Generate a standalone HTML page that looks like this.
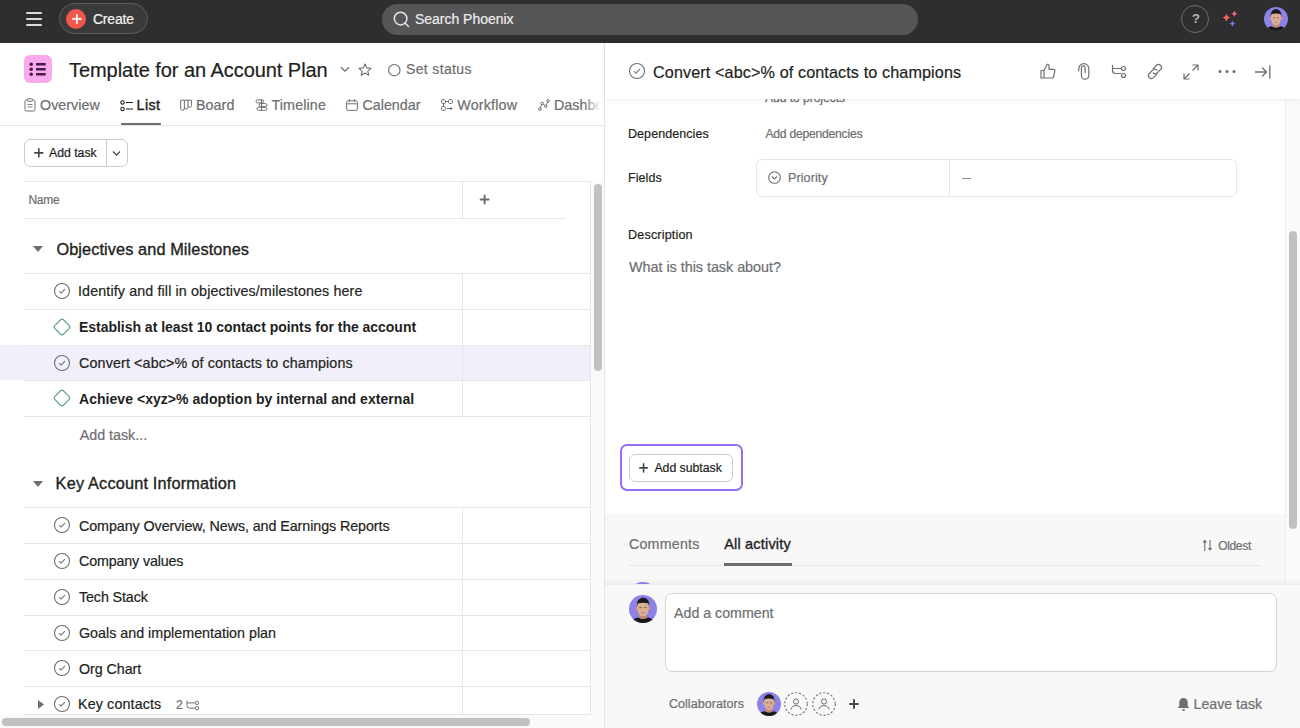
<!DOCTYPE html>
<html><head><meta charset="utf-8">
<style>
*{box-sizing:border-box;margin:0;padding:0}
html,body{width:1300px;height:728px;overflow:hidden;background:#fff;font-family:"Liberation Sans",sans-serif;color:#1e1f21}
.abs{position:absolute}
.t{position:absolute;white-space:nowrap;line-height:1;-webkit-text-stroke:0.2px currentColor}
svg{position:absolute;overflow:visible}
</style></head><body>
<div class="abs" style="left:0px;top:0px;width:1300px;height:43px;background:#2e2e30"></div>
<div class="abs" style="left:25.7px;top:12.1px;width:16.2px;height:2px;background:#dcdcdc;border-radius:1px"></div>
<div class="abs" style="left:25.7px;top:18.1px;width:16.2px;height:2px;background:#dcdcdc;border-radius:1px"></div>
<div class="abs" style="left:25.7px;top:24.0px;width:16.2px;height:2px;background:#dcdcdc;border-radius:1px"></div>
<div class="abs" style="left:59.3px;top:3.3px;width:88.5px;height:31.2px;border:1px solid #5c5c5e;border-radius:16px;background:#3a3a3c"></div>
<div class="abs" style="left:66.3px;top:8.8px;width:20.2px;height:20.2px;background:#f1574a;border-radius:50%"></div>
<svg style="left:68.5px;top:10.8px;" width="15.8" height="15.9" viewBox="0 0 15.8 15.9"><path d="M3.90 7.95H11.90M7.90 3.90V12.00" stroke="#fff" stroke-width="1.8" stroke-linecap="round"/></svg>
<div class="t" style="left:92.90px;top:12.05px;font-size:14px;color:#f5f4f3;letter-spacing:-0.187px;">Create</div>
<div class="abs" style="left:382px;top:3.5px;width:536px;height:31px;background:#565557;border-radius:16px"></div>
<svg style="left:393px;top:11px;" width="18" height="18" viewBox="0 0 18 18"><circle cx="7.6" cy="7.6" r="6.3" fill="none" stroke="#e6e6e6" stroke-width="1.5"/><line x1="12" y1="12" x2="15.5" y2="15.5" stroke="#e6e6e6" stroke-width="1.5" stroke-linecap="round"/></svg>
<div class="t" style="left:414.90px;top:11.75px;font-size:14px;color:#ededed;letter-spacing:-0.011px;">Search Phoenix</div>
<div class="abs" style="left:1181px;top:5px;width:28px;height:28px;border:1px solid #6e6e70;border-radius:50%"></div>
<div class="t" style="left:1191.70px;top:12.47px;font-size:13.5px;color:#b4b4b4;font-weight:bold;-webkit-text-stroke-width:0;">?</div>
<svg style="left:1220px;top:8px;" width="20" height="20" viewBox="0 0 20 20"><path d="M6.4 5.199999999999999 Q7.016 8.984 10.8 9.6 Q7.016 10.216 6.4 14.0 Q5.784000000000001 10.216 2.0 9.6 Q5.784000000000001 8.984 6.4 5.199999999999999Z" fill="#f4645a"/><path d="M14.4 2.5 Q14.862 5.338 17.7 5.8 Q14.862 6.262 14.4 9.1 Q13.938 6.262 11.100000000000001 5.8 Q13.938 5.338 14.4 2.5Z" fill="#ec6b7a"/><path d="M12.4 12.399999999999999 Q12.848 15.152 15.600000000000001 15.6 Q12.848 16.048 12.4 18.8 Q11.952 16.048 9.2 15.6 Q11.952 15.152 12.4 12.399999999999999Z" fill="#6d7cf0"/></svg>
<svg style="left:1264.1px;top:6.699999999999999px;" width="24" height="24" viewBox="0 0 24 24"><defs><clipPath id="c12761187"><circle cx="12" cy="12" r="12"/></clipPath></defs>
<g clip-path="url(#c12761187)"><rect width="24" height="24" fill="#8c82e8"/>
<g transform="scale(1.0)">
<path d="M0 26 Q2 20 7.8 19.2 Q12 21.6 16.2 19.2 Q22 20 24 26Z" fill="#1a1718"/>
<path d="M8.4 15.5 H15.6 V19.4 Q12 21.6 8.4 19.4Z" fill="#b98870"/>
<ellipse cx="6.6" cy="11.3" rx="1.1" ry="1.8" fill="#c8977f"/>
<ellipse cx="17.5" cy="11.3" rx="1.1" ry="1.8" fill="#c8977f"/>
<path d="M7.1 9 Q6.9 15.2 9.4 17.5 Q12 19.1 14.6 17.5 Q17.1 15.2 16.9 9 Q17 4.5 12 4.5 Q7 4.5 7.1 9Z" fill="#dcae96"/>
<path d="M6.7 10.3 Q6.1 2.8 12 2.1 Q17.9 2.5 17.4 10.3 Q17 7.5 16.2 7 Q12 6.2 7.8 7 Q7.1 7.5 6.7 10.3Z" fill="#1f1a19"/>
<path d="M8.9 10.8h2.2M12.9 10.8h2.2" stroke="#7a5a4c" stroke-width=".8"/>
<path d="M10.6 15.2 Q12 15.8 13.4 15.2" stroke="#a8705f" stroke-width=".7" fill="none"/>
</g></g></svg>
<div class="abs" style="left:24px;top:55px;width:28px;height:28px;background:#f9aaef;border-radius:6px"></div>
<svg style="left:24px;top:55px;" width="28" height="28" viewBox="0 0 28 28"><circle cx="7.2" cy="9.3" r="1.75" fill="#4a1a44"/><rect x="12" y="8.0" width="9.7" height="2.6" rx=".5" fill="#4a1a44"/><circle cx="7.2" cy="14.3" r="1.75" fill="#4a1a44"/><rect x="12" y="13.0" width="9.7" height="2.6" rx=".5" fill="#4a1a44"/><circle cx="7.2" cy="19.3" r="1.75" fill="#4a1a44"/><rect x="12" y="18.0" width="9.7" height="2.6" rx=".5" fill="#4a1a44"/></svg>
<div class="t" style="left:69.00px;top:60.47px;font-size:20px;color:#1e1f21;letter-spacing:-0.053px;">Template for an Account Plan</div>
<svg style="left:340px;top:66px;" width="10" height="7" viewBox="0 0 10 7"><path d="M1 1.2 L5 5.2 L9 1.2" fill="none" stroke="#6d6e6f" stroke-width="1.3"/></svg>
<svg style="left:358px;top:63px;" width="14" height="13" viewBox="0 0 14 13"><path d="M7 1 L8.8 4.9 L13 5.3 L9.8 8.1 L10.8 12.3 L7 10.1 L3.2 12.3 L4.2 8.1 L1 5.3 L5.2 4.9Z" fill="none" stroke="#6d6e6f" stroke-width="1.1" stroke-linejoin="round"/></svg>
<svg style="left:387.5px;top:63.5px;" width="13" height="13" viewBox="0 0 13 13"><circle cx="6.3" cy="6.2" r="5.7" fill="none" stroke="#6d6e6f" stroke-width="1.1"/></svg>
<div class="t" style="left:406.00px;top:62.45px;font-size:14px;color:#6d6e6f;letter-spacing:0.361px;-webkit-text-stroke:0.35px #6d6e6f;-webkit-text-stroke-width:0.2px;">Set status</div>
<div class="t" style="left:40.00px;top:97.90px;font-size:14.3px;color:#6d6e6f;letter-spacing:0.020px;-webkit-text-stroke:0.35px #6d6e6f;-webkit-text-stroke-width:0.2px;">Overview</div>
<div class="t" style="left:136.60px;top:97.90px;font-size:14.3px;color:#1e1f21;letter-spacing:0.375px;-webkit-text-stroke:0.35px #1e1f21;-webkit-text-stroke-width:0.4px;">List</div>
<div class="t" style="left:196.00px;top:97.90px;font-size:14.3px;color:#6d6e6f;letter-spacing:0.050px;-webkit-text-stroke:0.35px #6d6e6f;-webkit-text-stroke-width:0.2px;">Board</div>
<div class="t" style="left:271.50px;top:97.90px;font-size:14.3px;color:#6d6e6f;letter-spacing:0.122px;-webkit-text-stroke:0.35px #6d6e6f;-webkit-text-stroke-width:0.2px;">Timeline</div>
<div class="t" style="left:362.50px;top:97.90px;font-size:14.3px;color:#6d6e6f;letter-spacing:-0.008px;-webkit-text-stroke:0.35px #6d6e6f;-webkit-text-stroke-width:0.2px;">Calendar</div>
<div class="t" style="left:457.30px;top:97.90px;font-size:14.3px;color:#6d6e6f;letter-spacing:0.172px;-webkit-text-stroke:0.35px #6d6e6f;-webkit-text-stroke-width:0.2px;">Workflow</div>
<div class="t" style="left:554.00px;top:97.90px;font-size:14.3px;color:#6d6e6f;-webkit-text-stroke:0.35px #6d6e6f;-webkit-text-stroke-width:0.2px;">Dashboard</div>
<div class="abs" style="left:584px;top:95px;width:21px;height:20px;background:linear-gradient(90deg,rgba(255,255,255,0),#fff 80%)"></div>
<svg style="left:24px;top:98px;" width="12" height="14" viewBox="0 0 12 14"><rect x="1" y="2" width="10" height="11" rx="1.5" fill="none" stroke="#6d6e6f" stroke-width="1"/><rect x="3.5" y="0.8" width="5" height="2.4" rx=".6" fill="#fff" stroke="#6d6e6f" stroke-width="1"/><path d="M3.5 6.5h5M3.5 9h5" stroke="#6d6e6f" stroke-width=".9"/></svg>
<svg style="left:120px;top:99.5px;" width="13" height="12" viewBox="0 0 13 12"><circle cx="2.5" cy="2.5" r="1.7" fill="none" stroke="#1e1f21" stroke-width="1.1"/><circle cx="2.5" cy="9" r="1.7" fill="none" stroke="#1e1f21" stroke-width="1.1"/><path d="M6 2.5h7M6 9h7" stroke="#1e1f21" stroke-width="1.1"/></svg>
<svg style="left:180px;top:99px;" width="12" height="12" viewBox="0 0 12 12"><g fill="none" stroke="#6d6e6f" stroke-width="1"><path d="M.6 1.2H11.4M.6 1.2V9.4a1.9 1.9 0 0 0 3.8 0V1.2M4.4 8.2a1.8 1.8 0 0 0 3.6 0V1.2M8 6.6a1.7 1.7 0 0 0 3.4 0V1.2"/></g></svg>
<svg style="left:254.5px;top:99px;" width="13" height="12" viewBox="0 0 13 12"><g fill="none" stroke="#6d6e6f" stroke-width="1"><rect x="1" y=".9" width="7.6" height="3" rx="1.5"/><rect x="4" y="4.6" width="8" height="3" rx="1.5"/><rect x="2" y="8.3" width="9.8" height="3" rx="1.5"/><path d="M6.5 0V12"/></g></svg>
<svg style="left:346px;top:99px;" width="12" height="12" viewBox="0 0 12 12"><rect x=".6" y="1.8" width="10.8" height="9.6" rx="1.5" fill="none" stroke="#6d6e6f" stroke-width="1"/><path d="M.6 4.8h10.8M3.5 .3v2.5M8.5 .3v2.5" stroke="#6d6e6f" stroke-width="1"/></svg>
<svg style="left:441px;top:99px;" width="12" height="12" viewBox="0 0 12 12"><rect x=".6" y=".6" width="3.8" height="3.8" rx="1" fill="none" stroke="#6d6e6f" stroke-width="1"/><rect x="7.6" y=".6" width="3.8" height="3.8" rx="1" fill="none" stroke="#6d6e6f" stroke-width="1"/><rect x=".6" y="7.6" width="3.8" height="3.8" rx="1" fill="none" stroke="#6d6e6f" stroke-width="1"/><path d="M4.4 2.5h3.2M2.5 4.4v3.2M6 9.5h5M9.5 8l1.5 1.5-1.5 1.5" fill="none" stroke="#6d6e6f" stroke-width="1"/></svg>
<svg style="left:538px;top:99px;" width="12" height="12" viewBox="0 0 12 12"><g fill="none" stroke="#6d6e6f" stroke-width="1"><circle cx="1.9" cy="10.1" r="1.3"/><circle cx="4.2" cy="4.5" r="1.3"/><circle cx="7.8" cy="7.3" r="1.3"/><circle cx="10.1" cy="1.8" r="1.3"/><path d="M2.5 8.9L3.6 5.7M5.2 5.3L6.8 6.5M8.3 6.1L9.5 3"/></g></svg>
<div class="abs" style="left:121px;top:123px;width:40px;height:2.5px;background:#6d6e6f;border-radius:1px"></div>
<div class="abs" style="left:0px;top:125px;width:605px;height:1px;background:#e6e4e4"></div>
<div class="abs" style="left:24px;top:139px;width:104px;height:28px;border:1px solid #cfcbcb;border-radius:6px;background:#fff"></div>
<div class="abs" style="left:106px;top:139px;width:1px;height:28px;background:#cfcbcb"></div>
<svg style="left:31.0px;top:144.5px;" width="15.7" height="15.7" viewBox="0 0 15.7 15.7"><path d="M3.80 7.85H11.90M7.85 3.80V11.90" stroke="#454547" stroke-width="1.6" stroke-linecap="round"/></svg>
<div class="t" style="left:49.00px;top:147.09px;font-size:12.3px;color:#1e1f21;letter-spacing:-0.029px;">Add task</div>
<svg style="left:112px;top:150px;" width="10" height="7" viewBox="0 0 10 7"><path d="M1 1.5L4.5 5L8 1.5" fill="none" stroke="#4a4b4d" stroke-width="1.3"/></svg>
<div class="abs" style="left:24px;top:181px;width:567px;height:1px;background:#e8e6e6"></div>
<div class="abs" style="left:24px;top:217.5px;width:542px;height:1px;background:#e8e6e6"></div>
<div class="abs" style="left:462px;top:182px;width:1px;height:36px;background:#e8e6e6"></div>
<div class="abs" style="left:590px;top:182px;width:1px;height:533px;background:#e8e6e6"></div>
<div class="t" style="left:28.40px;top:194.04px;font-size:12px;color:#6d6e6f;letter-spacing:-0.245px;">Name</div>
<svg style="left:478px;top:193px;" width="13" height="13" viewBox="0 0 13 13"><path d="M2.6 6.5H10.6M6.6 2.5V10.5" stroke="#68696b" stroke-width="1.9" stroke-linecap="round"/></svg>
<div class="abs" style="left:591px;top:181px;width:13px;height:547px;background:#fafafa"></div>
<div class="abs" style="left:594px;top:184px;width:8px;height:187px;background:#c1c1c1;border-radius:4px"></div>
<svg style="left:33px;top:246px;" width="10" height="6" viewBox="0 0 10 6"><path d="M0 0H10L5 6Z" fill="#6d6e6f"/></svg>
<div class="t" style="left:56.40px;top:240.80px;font-size:16.3px;color:#1e1f21;letter-spacing:0.104px;-webkit-text-stroke:0.35px #1e1f21;">Objectives and Milestones</div>
<div class="abs" style="left:24px;top:273px;width:567px;height:1px;background:#e8e6e6"></div>
<div class="abs" style="left:462px;top:273px;width:1px;height:36px;background:#e8e6e6"></div>
<svg style="left:53.5px;top:283.2px;" width="16" height="16" viewBox="0 0 16 16"><circle cx="8" cy="8" r="7.5" fill="none" stroke="#6d6e6f" stroke-width="1.1"/><path d="M5.2 8.3L7.1 10.1L10.9 6.2" fill="none" stroke="#6d6e6f" stroke-width="1.1"/></svg>
<div class="t" style="left:78.00px;top:284.20px;font-size:14.3px;color:#1e1f21;letter-spacing:0.120px;">Identify and fill in objectives/milestones here</div>
<div class="abs" style="left:24px;top:309px;width:567px;height:1px;background:#e8e6e6"></div>
<div class="abs" style="left:462px;top:309px;width:1px;height:36px;background:#e8e6e6"></div>
<svg style="left:52.5px;top:318.2px;" width="18" height="18" viewBox="0 0 18 18"><rect x="2.9" y="2.9" width="12.2" height="12.2" rx="2.3" transform="rotate(45 9 9)" fill="none" stroke="#5da386" stroke-width="1.15"/></svg>
<div class="t" style="left:79.00px;top:320.20px;font-size:14px;color:#1e1f21;letter-spacing:-0.026px;font-weight:bold;-webkit-text-stroke-width:0;">Establish at least 10 contact points for the account</div>
<div class="abs" style="left:0px;top:345px;width:590px;height:35px;background:#f0effa"></div>
<div class="abs" style="left:24px;top:345px;width:567px;height:1px;background:#e8e6e6"></div>
<div class="abs" style="left:462px;top:345px;width:1px;height:35px;background:#e8e6e6"></div>
<svg style="left:53.5px;top:355.2px;" width="16" height="16" viewBox="0 0 16 16"><circle cx="8" cy="8" r="7.5" fill="none" stroke="#6d6e6f" stroke-width="1.1"/><path d="M5.2 8.3L7.1 10.1L10.9 6.2" fill="none" stroke="#6d6e6f" stroke-width="1.1"/></svg>
<div class="t" style="left:79.00px;top:355.70px;font-size:14.3px;color:#1e1f21;letter-spacing:0.133px;">Convert &lt;abc&gt;% of contacts to champions</div>
<div class="abs" style="left:24px;top:380px;width:567px;height:1px;background:#e8e6e6"></div>
<div class="abs" style="left:462px;top:380px;width:1px;height:36px;background:#e8e6e6"></div>
<svg style="left:52.5px;top:389.2px;" width="18" height="18" viewBox="0 0 18 18"><rect x="2.9" y="2.9" width="12.2" height="12.2" rx="2.3" transform="rotate(45 9 9)" fill="none" stroke="#5da386" stroke-width="1.15"/></svg>
<div class="t" style="left:79.00px;top:391.70px;font-size:14px;color:#1e1f21;letter-spacing:0.045px;font-weight:bold;-webkit-text-stroke-width:0;">Achieve &lt;xyz&gt;% adoption by internal and external</div>
<div class="abs" style="left:24px;top:416px;width:567px;height:1px;background:#e8e6e6"></div>
<div class="t" style="left:79.70px;top:427.90px;font-size:14.3px;color:#6d6e6f;letter-spacing:-0.008px;">Add task...</div>
<svg style="left:33px;top:481px;" width="10" height="6" viewBox="0 0 10 6"><path d="M0 0H10L5 6Z" fill="#6d6e6f"/></svg>
<div class="t" style="left:55.60px;top:474.80px;font-size:16.3px;color:#1e1f21;letter-spacing:0.185px;-webkit-text-stroke:0.35px #1e1f21;">Key Account Information</div>
<div class="abs" style="left:24px;top:507px;width:567px;height:1px;background:#e8e6e6"></div>
<div class="abs" style="left:462px;top:507px;width:1px;height:36px;background:#e8e6e6"></div>
<svg style="left:53.5px;top:517.2px;" width="16" height="16" viewBox="0 0 16 16"><circle cx="8" cy="8" r="7.5" fill="none" stroke="#6d6e6f" stroke-width="1.1"/><path d="M5.2 8.3L7.1 10.1L10.9 6.2" fill="none" stroke="#6d6e6f" stroke-width="1.1"/></svg>
<div class="t" style="left:79.00px;top:518.65px;font-size:14.3px;color:#1e1f21;letter-spacing:-0.077px;">Company Overview, News, and Earnings Reports</div>
<div class="abs" style="left:24px;top:543px;width:567px;height:1px;background:#e8e6e6"></div>
<div class="abs" style="left:462px;top:543px;width:1px;height:36px;background:#e8e6e6"></div>
<svg style="left:53.5px;top:553.2px;" width="16" height="16" viewBox="0 0 16 16"><circle cx="8" cy="8" r="7.5" fill="none" stroke="#6d6e6f" stroke-width="1.1"/><path d="M5.2 8.3L7.1 10.1L10.9 6.2" fill="none" stroke="#6d6e6f" stroke-width="1.1"/></svg>
<div class="t" style="left:79.00px;top:554.40px;font-size:14.3px;color:#1e1f21;letter-spacing:-0.157px;">Company values</div>
<div class="abs" style="left:24px;top:579px;width:567px;height:1px;background:#e8e6e6"></div>
<div class="abs" style="left:462px;top:579px;width:1px;height:36px;background:#e8e6e6"></div>
<svg style="left:53.5px;top:589.2px;" width="16" height="16" viewBox="0 0 16 16"><circle cx="8" cy="8" r="7.5" fill="none" stroke="#6d6e6f" stroke-width="1.1"/><path d="M5.2 8.3L7.1 10.1L10.9 6.2" fill="none" stroke="#6d6e6f" stroke-width="1.1"/></svg>
<div class="t" style="left:79.00px;top:590.15px;font-size:14.3px;color:#1e1f21;letter-spacing:-0.120px;">Tech Stack</div>
<div class="abs" style="left:24px;top:615px;width:567px;height:1px;background:#e8e6e6"></div>
<div class="abs" style="left:462px;top:615px;width:1px;height:35px;background:#e8e6e6"></div>
<svg style="left:53.5px;top:625.2px;" width="16" height="16" viewBox="0 0 16 16"><circle cx="8" cy="8" r="7.5" fill="none" stroke="#6d6e6f" stroke-width="1.1"/><path d="M5.2 8.3L7.1 10.1L10.9 6.2" fill="none" stroke="#6d6e6f" stroke-width="1.1"/></svg>
<div class="t" style="left:79.00px;top:625.90px;font-size:14.3px;color:#1e1f21;letter-spacing:-0.005px;">Goals and implementation plan</div>
<div class="abs" style="left:24px;top:650px;width:567px;height:1px;background:#e8e6e6"></div>
<div class="abs" style="left:462px;top:650px;width:1px;height:36px;background:#e8e6e6"></div>
<svg style="left:53.5px;top:660.2px;" width="16" height="16" viewBox="0 0 16 16"><circle cx="8" cy="8" r="7.5" fill="none" stroke="#6d6e6f" stroke-width="1.1"/><path d="M5.2 8.3L7.1 10.1L10.9 6.2" fill="none" stroke="#6d6e6f" stroke-width="1.1"/></svg>
<div class="t" style="left:79.00px;top:661.65px;font-size:14.3px;color:#1e1f21;letter-spacing:-0.074px;">Org Chart</div>
<div class="abs" style="left:24px;top:686px;width:567px;height:1px;background:#e8e6e6"></div>
<div class="abs" style="left:462px;top:686px;width:1px;height:28px;background:#e8e6e6"></div>
<svg style="left:53.5px;top:696.2px;" width="16" height="16" viewBox="0 0 16 16"><circle cx="8" cy="8" r="7.5" fill="none" stroke="#6d6e6f" stroke-width="1.1"/><path d="M5.2 8.3L7.1 10.1L10.9 6.2" fill="none" stroke="#6d6e6f" stroke-width="1.1"/></svg>
<div class="t" style="left:78.00px;top:697.40px;font-size:14.3px;color:#1e1f21;letter-spacing:0.127px;">Key contacts</div>
<div class="abs" style="left:24px;top:714px;width:567px;height:1px;background:#e8e6e6"></div>
<svg style="left:37.5px;top:700px;" width="6" height="9" viewBox="0 0 6 9"><path d="M0 0L6 4.5L0 9Z" fill="#6d6e6f"/></svg>
<div class="t" style="left:176.00px;top:698.62px;font-size:12.5px;color:#6d6e6f;">2</div>
<svg style="left:186px;top:699.5px;" width="14" height="11" viewBox="0 0 14 11"><path d="M1 .5V5.6a2.6 2.6 0 0 0 2.6 2.6H8.6M1 2.9H8.6" fill="none" stroke="#6d6e6f" stroke-width="1"/><circle cx="10.9" cy="2.9" r="1.7" fill="none" stroke="#6d6e6f" stroke-width="1"/><circle cx="10.9" cy="8.2" r="1.7" fill="none" stroke="#6d6e6f" stroke-width="1"/></svg>
<div class="abs" style="left:0px;top:715px;width:604px;height:13px;background:#fafafa"></div>
<div class="abs" style="left:2px;top:717.5px;width:528px;height:8px;background:#c1c1c1;border-radius:4px"></div>
<div class="abs" style="left:604px;top:43px;width:1px;height:685px;background:#e6e4e4"></div>
<div class="abs" style="left:605px;top:43px;width:695px;height:685px;background:#fff"></div>
<div class="abs" style="left:1285px;top:99px;width:15px;height:485px;background:#fafafa;border-left:1px solid #efeded"></div>
<div class="abs" style="left:1289px;top:230.5px;width:8px;height:298.5px;background:#c1c1c1;border-radius:4px"></div>
<div class="t" style="left:765.00px;top:91.84px;font-size:12px;color:#6d6e6f;-webkit-text-stroke:0.35px #6d6e6f;-webkit-text-stroke-width:0.25px;">Add to projects</div>
<div class="abs" style="left:605px;top:43px;width:695px;height:56px;background:#fff;box-shadow:0 1px 5px rgba(0,0,0,.07)"></div>
<svg style="left:628.5px;top:63px;" width="16" height="16" viewBox="0 0 16 16"><circle cx="8" cy="8" r="7.5" fill="none" stroke="#6d6e6f" stroke-width="1.1"/><path d="M5.2 8.3L7.1 10.1L10.9 6.2" fill="none" stroke="#6d6e6f" stroke-width="1.1"/></svg>
<div class="t" style="left:653.00px;top:63.69px;font-size:16.2px;color:#1e1f21;letter-spacing:0.104px;">Convert &lt;abc&gt;% of contacts to champions</div>
<svg style="left:1040px;top:63px;" width="16" height="16" viewBox="0 0 16 16"><path d="M1 7.5h3v7.5H1Z M4 7.5 L7.2 1.3 Q9 1 9 3 V6.3 H13.5 Q15.2 6.5 14.8 8.2 L13.6 13.6 Q13.2 15 11.8 15 H4" fill="none" stroke="#6d6e6f" stroke-width="1.2" stroke-linejoin="round"/></svg>
<svg style="left:1077px;top:63px;" width="13" height="17" viewBox="0 0 13 17"><path d="M1.8 7.8V5.6a5 5 0 0 1 10 0V12.5a3.7 3.7 0 0 1-7.4 0V4.8a1.85 1.85 0 0 1 3.7 0V9.8" fill="none" stroke="#6d6e6f" stroke-width="1.2" stroke-linecap="round"/></svg>
<svg style="left:1111px;top:64px;" width="16" height="15" viewBox="0 0 16 15"><path d="M1.5 1V6.5a3 3 0 0 0 3 3H10M1.5 4.5H10" fill="none" stroke="#6d6e6f" stroke-width="1.2"/><circle cx="12.5" cy="4.5" r="2" fill="none" stroke="#6d6e6f" stroke-width="1.2"/><circle cx="12.5" cy="11.5" r="2" fill="none" stroke="#6d6e6f" stroke-width="1.2"/></svg>
<svg style="left:1147px;top:63px;" width="16" height="17" viewBox="0 0 16 17"><g fill="none" stroke="#6d6e6f" stroke-width="1.2" stroke-linecap="round"><path d="M6.3 5.6L9.6 2.3a2.9 2.9 0 0 1 4.1 4.1L10.3 9.8a2.9 2.9 0 0 1-4.1 0"/><path d="M9.7 11.3L6.4 14.6a2.9 2.9 0 0 1-4.1-4.1L5.7 7.1a2.9 2.9 0 0 1 4.1 0"/></g></svg>
<svg style="left:1183px;top:64px;" width="16" height="16" viewBox="0 0 16 16"><path d="M9.5 1H15V6.5M15 1L9.5 6.5M6.5 15H1V9.5M1 15L6.5 9.5" fill="none" stroke="#6d6e6f" stroke-width="1.2"/></svg>
<svg style="left:1218px;top:69px;" width="18" height="5" viewBox="0 0 18 5"><circle cx="2" cy="2.5" r="1.5" fill="#6d6e6f"/><circle cx="9" cy="2.5" r="1.5" fill="#6d6e6f"/><circle cx="16" cy="2.5" r="1.5" fill="#6d6e6f"/></svg>
<svg style="left:1254px;top:64px;" width="17" height="16" viewBox="0 0 17 16"><path d="M1 8H12.5M8 3.5L12.5 8L8 12.5M15.8 1.5V14.5" fill="none" stroke="#6d6e6f" stroke-width="1.3"/></svg>
<div class="t" style="left:628.00px;top:127.92px;font-size:12.5px;color:#1e1f21;letter-spacing:0.066px;">Dependencies</div>
<div class="t" style="left:765.40px;top:127.67px;font-size:12.2px;color:#6d6e6f;letter-spacing:-0.258px;">Add dependencies</div>
<div class="t" style="left:628.00px;top:171.92px;font-size:12.5px;color:#1e1f21;letter-spacing:0.061px;">Fields</div>
<div class="abs" style="left:756px;top:159px;width:481px;height:38px;border:1px solid #e8e6e6;border-radius:6px"></div>
<div class="abs" style="left:948.5px;top:160px;width:1px;height:36px;background:#e8e6e6"></div>
<svg style="left:768px;top:171px;" width="13" height="13" viewBox="0 0 13 13"><circle cx="6.5" cy="6.5" r="5.8" fill="none" stroke="#6d6e6f" stroke-width="1.1"/><path d="M4 5.5L6.5 8L9 5.5" fill="none" stroke="#6d6e6f" stroke-width="1.1"/></svg>
<div class="t" style="left:788.00px;top:171.83px;font-size:12.6px;color:#6d6e6f;letter-spacing:0.073px;">Priority</div>
<div class="abs" style="left:961.5px;top:177.5px;width:9px;height:1.2px;background:#8a8a8a"></div>
<div class="t" style="left:628.00px;top:229.33px;font-size:12.6px;color:#1e1f21;letter-spacing:0.161px;">Description</div>
<div class="t" style="left:629.00px;top:260.21px;font-size:14.4px;color:#6d6e6f;letter-spacing:-0.034px;">What is this task about?</div>
<div class="abs" style="left:620.2px;top:444px;width:123px;height:47px;border:2px solid #9a6df5;border-radius:7px"></div>
<div class="abs" style="left:629px;top:454px;width:104px;height:27.5px;border:1px solid #cfcbcb;border-radius:6px;background:#fff"></div>
<svg style="left:635.9px;top:459.9px;" width="15.2" height="15.7" viewBox="0 0 15.2 15.7"><path d="M3.80 7.85H11.40M7.60 3.80V11.90" stroke="#454547" stroke-width="1.6" stroke-linecap="round"/></svg>
<div class="t" style="left:654.40px;top:461.89px;font-size:12.3px;color:#1e1f21;letter-spacing:-0.023px;">Add subtask</div>
<div class="abs" style="left:605px;top:513.5px;width:680px;height:214.5px;background:#f8f8f8"></div>
<div class="t" style="left:629.00px;top:537.28px;font-size:14.2px;color:#6d6e6f;letter-spacing:0.244px;">Comments</div>
<div class="t" style="left:724.20px;top:537.03px;font-size:14.5px;color:#1e1f21;letter-spacing:0.190px;-webkit-text-stroke:0.35px #1e1f21;">All activity</div>
<div class="abs" style="left:629px;top:565px;width:632px;height:1px;background:#e8e6e6"></div>
<div class="abs" style="left:724px;top:563px;width:68px;height:2.5px;background:#6d6e6f"></div>
<svg style="left:1202px;top:538px;" width="11" height="14" viewBox="0 0 11 14"><path d="M2.8 13V3.5M8 2V10.5" stroke="#6d6e6f" stroke-width="1.1"/><path d="M2.8 1.6L5 4.4H.6Z M8 12.8L10.2 10H5.8Z" fill="#6d6e6f"/></svg>
<div class="t" style="left:1218.20px;top:539.84px;font-size:12px;color:#6d6e6f;letter-spacing:-0.330px;">Oldest</div>
<svg style="left:628.5px;top:582.3px;" width="28" height="28" viewBox="0 0 28 28"><defs><clipPath id="c64255963"><circle cx="14" cy="14" r="14"/></clipPath></defs>
<g clip-path="url(#c64255963)"><rect width="28" height="28" fill="#8c82e8"/>
<g transform="scale(1.1666666666666667)">
<path d="M0 26 Q2 20 7.8 19.2 Q12 21.6 16.2 19.2 Q22 20 24 26Z" fill="#1a1718"/>
<path d="M8.4 15.5 H15.6 V19.4 Q12 21.6 8.4 19.4Z" fill="#b98870"/>
<ellipse cx="6.6" cy="11.3" rx="1.1" ry="1.8" fill="#c8977f"/>
<ellipse cx="17.5" cy="11.3" rx="1.1" ry="1.8" fill="#c8977f"/>
<path d="M7.1 9 Q6.9 15.2 9.4 17.5 Q12 19.1 14.6 17.5 Q17.1 15.2 16.9 9 Q17 4.5 12 4.5 Q7 4.5 7.1 9Z" fill="#dcae96"/>
<path d="M6.7 10.3 Q6.1 2.8 12 2.1 Q17.9 2.5 17.4 10.3 Q17 7.5 16.2 7 Q12 6.2 7.8 7 Q7.1 7.5 6.7 10.3Z" fill="#1f1a19"/>
<path d="M8.9 10.8h2.2M12.9 10.8h2.2" stroke="#7a5a4c" stroke-width=".8"/>
<path d="M10.6 15.2 Q12 15.8 13.4 15.2" stroke="#a8705f" stroke-width=".7" fill="none"/>
</g></g></svg>
<div class="abs" style="left:605px;top:578px;width:695px;height:6px;background:linear-gradient(rgba(0,0,0,0),rgba(0,0,0,.035))"></div>
<div class="abs" style="left:605px;top:584px;width:695px;height:144px;background:#f8f8f8;border-top:1px solid #ebe9e9"></div>
<svg style="left:628.7px;top:595px;" width="28" height="28" viewBox="0 0 28 28"><defs><clipPath id="c64276090"><circle cx="14" cy="14" r="14"/></clipPath></defs>
<g clip-path="url(#c64276090)"><rect width="28" height="28" fill="#8c82e8"/>
<g transform="scale(1.1666666666666667)">
<path d="M0 26 Q2 20 7.8 19.2 Q12 21.6 16.2 19.2 Q22 20 24 26Z" fill="#1a1718"/>
<path d="M8.4 15.5 H15.6 V19.4 Q12 21.6 8.4 19.4Z" fill="#b98870"/>
<ellipse cx="6.6" cy="11.3" rx="1.1" ry="1.8" fill="#c8977f"/>
<ellipse cx="17.5" cy="11.3" rx="1.1" ry="1.8" fill="#c8977f"/>
<path d="M7.1 9 Q6.9 15.2 9.4 17.5 Q12 19.1 14.6 17.5 Q17.1 15.2 16.9 9 Q17 4.5 12 4.5 Q7 4.5 7.1 9Z" fill="#dcae96"/>
<path d="M6.7 10.3 Q6.1 2.8 12 2.1 Q17.9 2.5 17.4 10.3 Q17 7.5 16.2 7 Q12 6.2 7.8 7 Q7.1 7.5 6.7 10.3Z" fill="#1f1a19"/>
<path d="M8.9 10.8h2.2M12.9 10.8h2.2" stroke="#7a5a4c" stroke-width=".8"/>
<path d="M10.6 15.2 Q12 15.8 13.4 15.2" stroke="#a8705f" stroke-width=".7" fill="none"/>
</g></g></svg>
<div class="abs" style="left:664.5px;top:593px;width:612px;height:79px;background:#fff;border:1px solid #d5d3d3;border-radius:7px"></div>
<div class="t" style="left:674.00px;top:605.78px;font-size:14.2px;color:#6d6e6f;letter-spacing:0.015px;">Add a comment</div>
<div class="t" style="left:668.90px;top:698.42px;font-size:12.5px;color:#6d6e6f;letter-spacing:0.059px;">Collaborators</div>
<svg style="left:756.5px;top:692.2px;" width="24" height="24" viewBox="0 0 24 24"><defs><clipPath id="c76857042"><circle cx="12" cy="12" r="12"/></clipPath></defs>
<g clip-path="url(#c76857042)"><rect width="24" height="24" fill="#8c82e8"/>
<g transform="scale(1.0)">
<path d="M0 26 Q2 20 7.8 19.2 Q12 21.6 16.2 19.2 Q22 20 24 26Z" fill="#1a1718"/>
<path d="M8.4 15.5 H15.6 V19.4 Q12 21.6 8.4 19.4Z" fill="#b98870"/>
<ellipse cx="6.6" cy="11.3" rx="1.1" ry="1.8" fill="#c8977f"/>
<ellipse cx="17.5" cy="11.3" rx="1.1" ry="1.8" fill="#c8977f"/>
<path d="M7.1 9 Q6.9 15.2 9.4 17.5 Q12 19.1 14.6 17.5 Q17.1 15.2 16.9 9 Q17 4.5 12 4.5 Q7 4.5 7.1 9Z" fill="#dcae96"/>
<path d="M6.7 10.3 Q6.1 2.8 12 2.1 Q17.9 2.5 17.4 10.3 Q17 7.5 16.2 7 Q12 6.2 7.8 7 Q7.1 7.5 6.7 10.3Z" fill="#1f1a19"/>
<path d="M8.9 10.8h2.2M12.9 10.8h2.2" stroke="#7a5a4c" stroke-width=".8"/>
<path d="M10.6 15.2 Q12 15.8 13.4 15.2" stroke="#a8705f" stroke-width=".7" fill="none"/>
</g></g></svg>
<svg style="left:784.3px;top:692.2px;" width="24" height="24" viewBox="0 0 24 24"><circle cx="12" cy="12" r="11.3" fill="none" stroke="#7c7c7c" stroke-width="1.15" stroke-dasharray="2.3 1.7"/><circle cx="12" cy="9.5" r="2.6" fill="none" stroke="#6d6e6f" stroke-width="1"/><path d="M7 17.5a5 4 0 0 1 10 0" fill="none" stroke="#6d6e6f" stroke-width="1"/></svg>
<svg style="left:812.4px;top:692.2px;" width="24" height="24" viewBox="0 0 24 24"><circle cx="12" cy="12" r="11.3" fill="none" stroke="#7c7c7c" stroke-width="1.15" stroke-dasharray="2.3 1.7"/><circle cx="12" cy="9.5" r="2.6" fill="none" stroke="#6d6e6f" stroke-width="1"/><path d="M7 17.5a5 4 0 0 1 10 0" fill="none" stroke="#6d6e6f" stroke-width="1"/></svg>
<svg style="left:846.0px;top:696.0px;" width="16.0" height="16.0" viewBox="0 0 16.0 16.0"><path d="M4.00 8.00H12.00M8.00 4.00V12.00" stroke="#4a4b4d" stroke-width="2" stroke-linecap="round"/></svg>
<svg style="left:1177px;top:697px;" width="13" height="14" viewBox="0 0 13 14"><path d="M6.5 1a4.2 4.2 0 0 1 4.2 4.2V9l1.6 2H.7l1.6-2V5.2A4.2 4.2 0 0 1 6.5 1Z" fill="#6d6e6f"/><path d="M4.8 12.3a1.7 1.7 0 0 0 3.4 0Z" fill="#6d6e6f"/></svg>
<div class="t" style="left:1193.60px;top:696.98px;font-size:14.2px;color:#6d6e6f;letter-spacing:-0.014px;-webkit-text-stroke:0.35px #6d6e6f;-webkit-text-stroke-width:0.2px;">Leave task</div>
</body></html>
